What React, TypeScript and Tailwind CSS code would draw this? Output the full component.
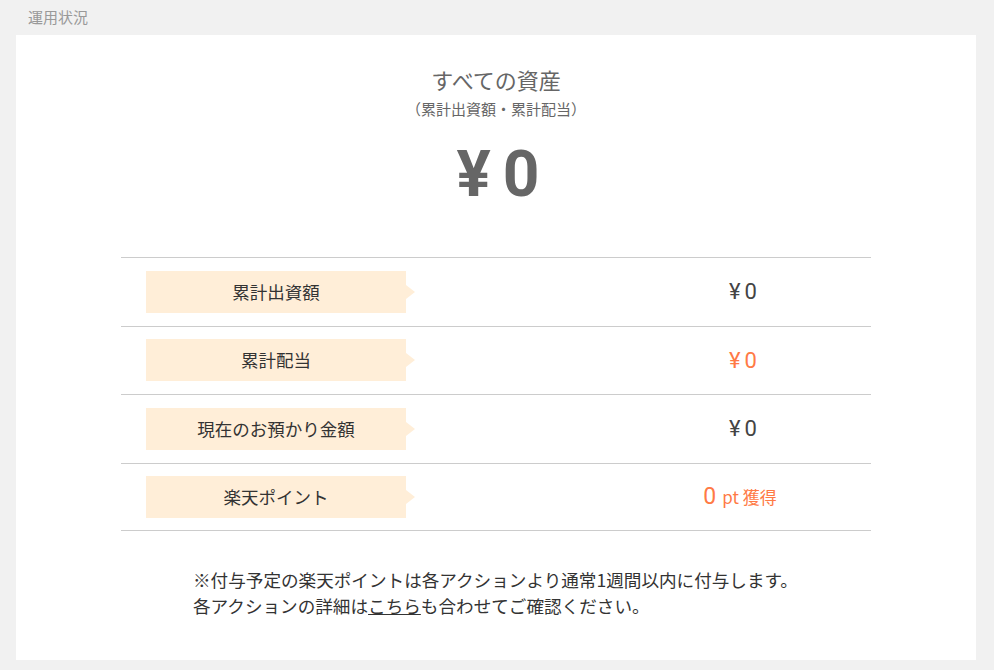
import React from "react";

const jp = { fontFamily: '"Noto Sans CJK JP", "Noto Sans", sans-serif' };
const num = { fontFamily: 'Roboto, "Noto Sans CJK JP", sans-serif' };

function Label({ children }: { children: React.ReactNode }) {
  return (
    <div className="relative w-[260px] h-[42px] bg-[#ffeed8] flex items-center justify-center text-[17.5px] text-[#333]">
      {children}
      <div className="absolute left-full top-1/2 -translate-y-1/2 w-0 h-0 border-y-[7px] border-y-transparent border-l-[9px] border-l-[#ffeed8]" />
    </div>
  );
}

function Row({ label, value, last }: { label: string; value: React.ReactNode; last?: boolean }) {
  return (
    <div className={`flex items-center h-[68.5px] border-t border-[#cccccc] ${last ? "border-b" : ""}`}>
      <div className="pl-[25px]">
        <Label>{label}</Label>
      </div>
      <div className="ml-auto w-[256px] flex justify-center">{value}</div>
    </div>
  );
}

export default function App() {
  return (
    <div className="w-[994px] h-[670px] bg-[#f1f1f1] pl-4 pr-[18px]" style={jp}>
      <div className="h-[35px] flex items-center pl-3 text-[15px] text-[#999]">運用状況</div>
      <div className="bg-white h-[625px] flex flex-col items-center">
        <div className="mt-[29px] text-[22px] leading-[30px] text-[#666]">すべての資産</div>
        <div className="mt-[5px] text-[15px] leading-[20px] text-[#666]">（累計出資額・累計配当）</div>
        <div className="mt-[19px] ml-[4px] text-[64px] leading-[74px] font-bold text-[#666] flex items-center gap-[12px]" style={num}>
          <span>¥</span>
          <span>0</span>
        </div>
        <div className="mt-[45px] w-[750px]">
          <Row label="累計出資額" value={<span className="text-[22px] text-[#444]" style={num}>¥<span className="ml-[4px]">0</span></span>} />
          <Row label="累計配当" value={<span className="text-[22px] text-[#ff7a45]" style={num}>¥<span className="ml-[4px]">0</span></span>} />
          <Row label="現在のお預かり金額" value={<span className="text-[22px] text-[#444]" style={num}>¥<span className="ml-[4px]">0</span></span>} />
          <Row
            label="楽天ポイント"
            last
            value={
              <span className="text-[#ff7a45] -ml-[6px]">
                <span className="text-[23px]" style={num}>0</span>
                <span className="text-[17px] ml-[6px]">pt 獲得</span>
              </span>
            }
          />
        </div>
        <div className="mt-[36px] w-[610px] pl-[2px] text-[17.6px] leading-[26px] text-[#333]">
          <div>※付与予定の楽天ポイントは各アクションより通常1週間以内に付与します。</div>
          <div>
            各アクションの詳細は<span className="underline">こちら</span>も合わせてご確認ください。
          </div>
        </div>
      </div>
    </div>
  );
}
